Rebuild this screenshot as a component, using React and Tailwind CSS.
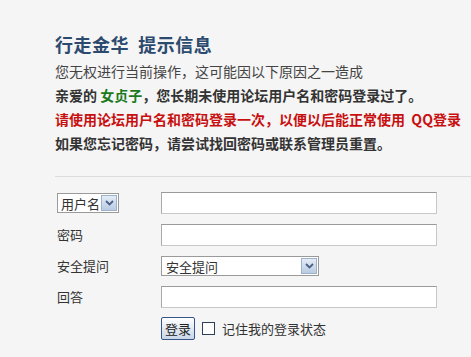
import React from 'react';

const font = { fontFamily: '"Noto Sans CJK SC", "Liberation Sans", sans-serif' };

function Arrow({ className }) {
  return (
    <span
      className={
        'flex items-center justify-center border border-[#9fb2cc] bg-gradient-to-b from-[#e4ecf6] to-[#b9cbe3] ' +
        className
      }
    >
      <svg width="9" height="6" viewBox="0 0 9 6">
        <path d="M1 1 L4.5 4.5 L8 1" fill="none" stroke="#4d6185" strokeWidth="1.8" />
      </svg>
    </span>
  );
}

function TextBox() {
  return (
    <div className="w-[276px] h-[22px] bg-white border border-[#a9a9a9] border-t-[#9a9a9a] border-r-[#c8c8c8] border-b-[#c8c8c8]" />
  );
}

export default function App() {
  return (
    <div
      className="w-[471px] h-[357px] overflow-hidden bg-[#f5f5f5] text-[#333] whitespace-nowrap"
      style={font}
    >
      <div className="pl-[55px] pt-[32px]">
        <h1 className="text-[18px] leading-[24px] font-bold text-[#2c4a6e] tracking-[0.5px]">
          行走金华&nbsp;&nbsp;提示信息
        </h1>
        <p className="mt-[3px] text-[14px] leading-[24px] text-[#444]">
          您无权进行当前操作，这可能因以下原因之一造成
        </p>
        <p className="text-[14px] leading-[24px] font-bold text-[#333]">
          亲爱的 <span className="text-[#1c7a1c]">女贞子</span>，您长期未使用论坛用户名和密码登录过了。
        </p>
        <p className="text-[14px] leading-[24px] font-bold text-[#c81010]">
          请使用论坛用户名和密码登录一次，以便以后能正常使用&nbsp;&nbsp;QQ登录
        </p>
        <p className="text-[14px] leading-[24px] font-bold text-[#333]">
          如果您忘记密码，请尝试找回密码或联系管理员重置。
        </p>
        <div className="mt-[21px] border-t border-[#dcdcdc]" />

        <div className="pl-[2px] pt-[15px] text-[12px] text-[#333]">
          <div className="grid grid-cols-[104px_auto] gap-y-[10px] items-center">
            <div className="flex items-center w-[62px] h-[20px] bg-white border border-[#9a9a9a] pl-[3px] pr-[1px] justify-between">
              <span className="text-[13px] leading-none">用户名</span>
              <Arrow className="w-[16px] h-[16px]" />
            </div>
            <TextBox />

            <span className="text-[13px]">密码</span>
            <TextBox />

            <span className="text-[13px]">安全提问</span>
            <div className="flex items-center w-[158px] h-[20px] bg-white border border-[#9a9a9a] pl-[4px] pr-[1px] justify-between">
              <span className="text-[13px] leading-none">安全提问</span>
              <Arrow className="w-[16px] h-[16px]" />
            </div>

            <span className="text-[13px]">回答</span>
            <TextBox />

            <span />
            <div className="flex items-center gap-[7px] -mt-[1px]">
              <button className="w-[34px] h-[23px] border border-[#36558a] rounded-[2px] bg-gradient-to-b from-white to-[#c9d6e8] text-[13px] leading-none text-[#222]">
                登录
              </button>
              <span className="w-[13px] h-[13px] border border-[#2f3f55] bg-white" />
              <span className="text-[13px]">记住我的登录状态</span>
            </div>
          </div>
        </div>
      </div>
    </div>
  );
}
